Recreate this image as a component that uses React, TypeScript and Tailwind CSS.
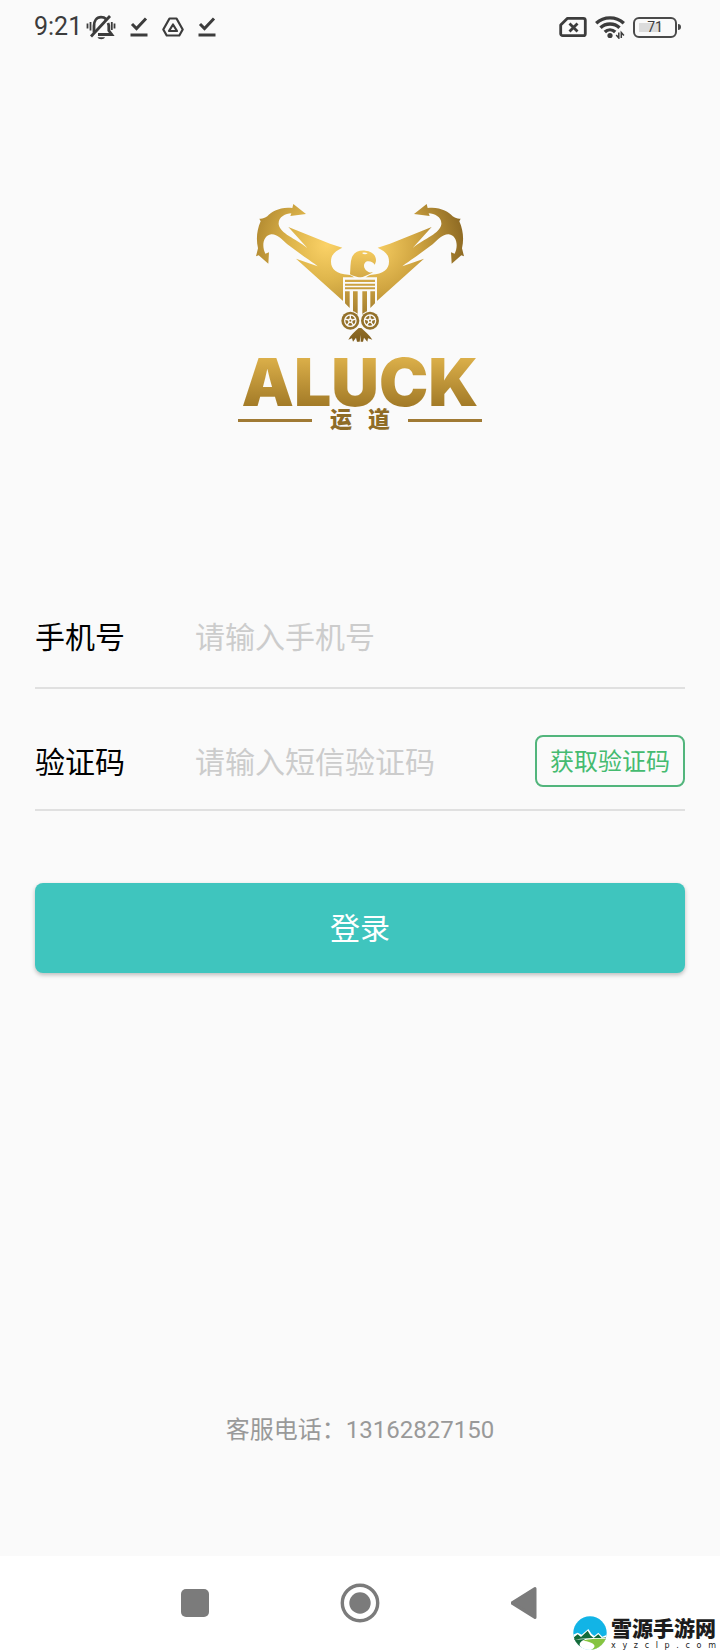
import { useState } from "react";

function MutedBellIcon() {
  return (
    <svg viewBox="0 0 30 26" className="w-[30px] h-[26px]" fill="none" stroke="#3c3c3c" strokeWidth="2.8">
      <path d="M8 18.500V12C8 7 10.500 3.200 15 3.200c2 0 3.800.6 5 1.800M22 9c.6 1.300.8 2.400.8 3.500v4l3 4H12" />
      <path d="M5 22.500 24 2" />
      <path d="M1.500 9.500v5M4.500 8v8.500M25.800 8v8M28.500 9.500v5" strokeWidth="1.800" />
      <path d="M11.500 23.300h7.500c-.8 2.600-6.700 2.600-7.500 0z" fill="#3c3c3c" stroke="none" />
    </svg>
  );
}

function CheckIcon() {
  return (
    <svg viewBox="0 0 18 20" className="w-[18px] h-5" fill="none" stroke="#3c3c3c" strokeWidth="3">
      <path d="M2 7l4.500 4.500L16 1.500" />
      <path d="M.5 18h17" />
    </svg>
  );
}

function DriveIcon() {
  return (
    <svg viewBox="0 0 22 20" className="w-[22px] h-5" fill="none" stroke="#3c3c3c" strokeLinejoin="round">
      <path d="M7.500 1.500h7L20.700 12.500 17.300 18.500H4.700L1.300 12.500z" strokeWidth="2.200" />
      <path d="M11 7.500l4 6.500H7z" strokeWidth="2.200" />
    </svg>
  );
}

function SimIcon() {
  return (
    <svg viewBox="0 0 28 22" className="w-7 h-[22px]" fill="none" stroke="#3c3c3c" strokeWidth="2.800">
      <path d="M8.500 2.300h15.800a2 2 0 0 1 2 2v13.400a2 2 0 0 1-2 2H3.700a2 2 0 0 1-2-2V9z" strokeLinejoin="round" />
      <path d="M10.500 7.500l8 8M18.500 7.500l-8 8" />
    </svg>
  );
}

function WifiIcon() {
  return (
    <svg viewBox="0 0 30 24" className="w-[30px] h-6" fill="none" stroke="#3c3c3c" strokeWidth="3.400">
      <path d="M1.200 8.300C9 1 21 1 28.800 8.300" />
      <path d="M5.500 12.800c5.200-5 13.800-5 19 0" />
      <path d="M9.800 17c3-2.800 7.400-2.800 10.400 0" />
      <circle cx="15" cy="20.500" r="2.600" fill="#3c3c3c" stroke="none" />
      <path d="M23.800 17.500v5.500l-2.600-3M26.300 23v-5.500l2.600 3" strokeWidth="1.500" />
    </svg>
  );
}

function Wheel({ cx }: { cx: number }) {
  return (
    <g>
      <circle cx={cx} cy="393" r="30" fill="#fafafa" />
      <circle cx={cx} cy="393" r="27" fill="#94712a" />
      <circle cx={cx} cy="393" r="17" fill="none" stroke="#fafafa" strokeWidth="4" />
      <circle cx={cx} cy="393" r="7" fill="#fafafa" />
      <path
        d="M0-17V0M0 0l16-5M0 0l10 14M0 0l-10 14M0 0l-16-5"
        transform={`translate(${cx} 393)`}
        stroke="#fafafa"
        strokeWidth="4"
      />
      <circle cx={cx} cy="393" r="3" fill="#94712a" />
    </g>
  );
}

const LEFT_WING =
  "M228 73 190 43 187 55C152 50 124 66 112 80 104 86 96 88 88 87L92 95C80 122 78 150 84 176L78 200 86 197 115 222 117 188 106 192C94 168 100 137 124 134 142 133 156 150 172 164L224 202C240 213 252 221 263 230L198 207 340 335V268L375 266C368 258 362 256 355 255 320 253 303 238 303 216 303 192 318 184 337 174L300 162 175 112 232 175C196 146 150 132 146 104 144 82 166 72 184 71L181 79z";

const RIGHT_WING =
  "M552 73 590 43 593 55C628 50 656 66 668 80 676 86 684 88 692 87L688 95C700 122 702 150 696 176L702 200 694 197 665 222 663 188 674 192C686 168 680 137 656 134 638 133 624 150 608 164L556 202C540 213 528 221 517 230L582 207 440 335V268L405 266C412 258 418 256 425 255 460 253 477 238 477 216 477 192 462 184 443 174L480 162 605 112 548 175C584 146 630 132 634 104 636 82 614 72 596 71L599 79z";

function Emblem() {
  return (
    <svg viewBox="75 40 630 420" className="w-[210px] h-[140px]">
      <defs>
        <radialGradient id="goldLeft" gradientUnits="userSpaceOnUse" cx="290" cy="165" r="260">
          <stop offset="0" stopColor="#fbd267" />
          <stop offset=".4" stopColor="#dfb64c" />
          <stop offset="1" stopColor="#a37b27" />
        </radialGradient>
        <radialGradient id="goldRight" gradientUnits="userSpaceOnUse" cx="430" cy="170" r="290">
          <stop offset="0" stopColor="#f9d064" />
          <stop offset=".45" stopColor="#d0a541" />
          <stop offset="1" stopColor="#866320" />
        </radialGradient>
        <linearGradient id="body" gradientUnits="userSpaceOnUse" x1="390" y1="180" x2="390" y2="460">
          <stop offset="0" stopColor="#f5cb5e" />
          <stop offset=".4" stopColor="#c99f40" />
          <stop offset="1" stopColor="#7d5c1d" />
        </linearGradient>
      </defs>
      <path d={LEFT_WING} fill="url(#goldLeft)" />
      <path d={RIGHT_WING} fill="url(#goldRight)" />
      {/* head and neck */}
      <path
        d="M360 254C362 238 360 218 366 202 373 187 388 181 406 183 426 184 437 196 438 211 438 217 436 221 434 225 430 217 420 213 411 215 398 221 400 236 411 244 419 250 424 249 429 247 420 256 402 257 390 267 380 259 370 260 360 254z"
        fill="url(#body)"
      />
      <path d="M396 190c6-2 12-2 17 1-5 4-12 4-17-1z" fill="#fafafa" />
      {/* shield */}
      <path d="M339 263H441V342L416 366V384H364V366L339 342z" fill="#fafafa" />
      <path
        d="M345 270H435V277H345zM345 282H435V288H345zM345 293H435V299H345zM345 305H359V355L345 341zM369 305H383V378H369zM397 305H411V378H397zM421 305H435V341L421 355z"
        fill="url(#body)"
      />
      <Wheel cx={361} />
      <Wheel cx={420} />
      <path
        d="M386 415H394C404 424 418 436 427 450L414 446 412 456 402 444 399 456H392V436L389 456H381L378 444 369 456 366 446 355 450C362 436 376 424 386 415z"
        fill="url(#body)"
      />
    </svg>
  );
}

function SiteMark() {
  return (
    <svg viewBox="0 0 102 102" className="w-[34px] h-[34px]">
      <defs>
        <clipPath id="disc">
          <circle cx="51" cy="51" r="50" />
        </clipPath>
      </defs>
      <g clipPath="url(#disc)">
        <path d="M0 0h102v102H0z" fill="#12b4e6" />
        <path d="M0 56 14 50 26 56 46 39 56 54 64 60 76 50 88 62 102 56V102H0z" fill="#fff" />
        <path d="M0 66 14 55 24 63 44 44 52 58 62 66 76 55 86 66 102 64V76H0z" fill="#136b3a" />
        <path d="M0 72C30 66 60 66 102 66V102H0z" fill="#fff" />
        <path d="M0 68C16 72 26 70 38 68 24 76 8 84 34 102H0z" fill="#136b3a" />
        <path d="M30 74C50 68 66 68 98 68L92 102H54C76 90 62 78 30 74z" fill="#86c440" />
      </g>
    </svg>
  );
}

const SITE_DOMAIN = "xyzclp.com";

export default function App() {
  const [phone, setPhone] = useState("");
  const [code, setCode] = useState("");

  return (
    <div className="relative min-h-screen flex flex-col bg-[#fafafa] font-['Roboto','Noto_Sans_CJK_SC',sans-serif]">
      {/* Status bar */}
      <header className="h-[54px] pl-[34px] pr-[39px] flex items-center justify-between text-[#3c3c3c]">
        <div className="flex items-center">
          <span className="text-[25px]">9:21</span>
          <div className="ml-1 flex items-center gap-[14px]">
            <MutedBellIcon />
            <CheckIcon />
            <DriveIcon />
            <CheckIcon />
          </div>
        </div>
        <div className="flex items-center gap-2">
          <SimIcon />
          <WifiIcon />
          <div className="flex items-center">
            <div className="w-11 h-[21px] border-2 border-[#4a4a4a] rounded-md p-1 flex">
              <span className="flex-1 flex items-center justify-center text-sm bg-linear-to-r from-[#dcdcdc] from-70% to-transparent to-70%">
                71
              </span>
            </div>
            <span className="w-[3px] h-[6px] ml-px bg-[#4a4a4a] rounded-r-sm" />
          </div>
        </div>
      </header>

      <main className="flex-1 flex flex-col px-[35px]">
        {/* Logo */}
        <div className="h-[531px] pt-[149px] flex flex-col items-center">
          <Emblem />
          <h1 className="mt-2 font-['Inter'] font-black text-[66px] leading-[62px] bg-linear-to-b from-[#dcb04a] from-10% to-[#a27a27] to-90% bg-clip-text text-transparent">
            ALUCK
          </h1>
          <div className="w-[244px] -mt-1 flex items-center gap-[18px]">
            <span className="flex-1 h-[3px] bg-[#a07a34]" />
            <p className="flex gap-4 text-[22px] leading-[22px] font-black text-[#8f6c26]">
              <span>运</span>
              <span>道</span>
            </p>
            <span className="flex-1 h-[3px] bg-[#a07a34]" />
          </div>
        </div>

        {/* Login form */}
        <form onSubmit={(e) => e.preventDefault()}>
          <div className="h-[104px] flex items-center border-b-2 border-[#e0e0e0] text-3xl">
            <label htmlFor="phone" className="w-40 pt-1 text-black">
              手机号
            </label>
            <input
              id="phone"
              type="tel"
              value={phone}
              onChange={(e) => setPhone(e.target.value)}
              placeholder="请输入手机号"
              className="flex-1 min-w-0 pt-1 bg-transparent outline-none placeholder:text-[#cccccc]"
            />
          </div>
          <div className="h-[98px] mt-6 flex items-center border-b-2 border-[#e0e0e0] text-3xl">
            <label htmlFor="code" className="w-40 pt-1 text-black">
              验证码
            </label>
            <input
              id="code"
              type="text"
              value={code}
              onChange={(e) => setCode(e.target.value)}
              placeholder="请输入短信验证码"
              className="flex-1 min-w-0 pt-1 bg-transparent outline-none placeholder:text-[#cccccc]"
            />
            <button
              type="button"
              className="w-[150px] h-[52px] pt-0.5 border-2 border-[#52b57c] rounded-lg text-2xl text-[#45bb70]"
            >
              获取验证码
            </button>
          </div>
          <button
            type="submit"
            className="w-full h-[90px] mt-[72px] pt-0.5 rounded-lg bg-[#3fc5be] text-3xl text-white shadow-[0_2px_4px_rgba(0,0,0,0.25)]"
          >
            登录
          </button>
        </form>

        <p className="mt-auto mb-[108px] text-center text-2xl leading-9 text-[#999999]">
          客服电话：<a href="tel:13162827150">13162827150</a>
        </p>
      </main>

      {/* Navigation bar */}
      <nav className="h-[94px] px-28 grid grid-cols-3 items-center justify-items-center bg-white">
        <button type="button" aria-label="最近任务">
          <svg viewBox="0 0 28 28" className="w-7 h-7">
            <rect width="28" height="28" rx="5" fill="#7b7b7b" />
          </svg>
        </button>
        <button type="button" aria-label="主屏幕">
          <svg viewBox="0 0 40 40" className="w-10 h-10">
            <circle cx="20" cy="20" r="17.700" fill="none" stroke="#7b7b7b" strokeWidth="3.400" />
            <circle cx="20" cy="20" r="10.700" fill="#7b7b7b" />
          </svg>
        </button>
        <button type="button" aria-label="返回">
          <svg viewBox="2 0 28 34" className="w-7 h-[34px]">
            <path d="M2.800 17 26 2.500v29z" fill="#7b7b7b" stroke="#7b7b7b" strokeWidth="3" strokeLinejoin="round" />
          </svg>
        </button>
      </nav>

      {/* Site watermark */}
      <div className="absolute right-1 bottom-0 flex items-end gap-1">
        <SiteMark />
        <div className="w-[105px] text-[#1c1c1c]">
          <p className="text-[21px] leading-6 font-black whitespace-nowrap">雪源手游网</p>
          <p className="flex justify-between text-[8px] leading-[9px] font-['DejaVu_Sans']">
            {SITE_DOMAIN.split("").map((ch, i) => (
              <span key={i}>{ch}</span>
            ))}
          </p>
        </div>
      </div>
    </div>
  );
}
